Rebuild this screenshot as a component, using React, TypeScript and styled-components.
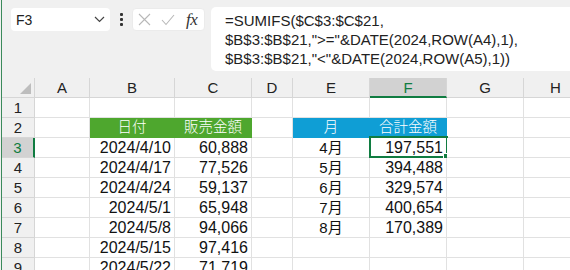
import React from 'react';
import styled, { createGlobalStyle } from 'styled-components';

const GlobalStyle = createGlobalStyle`
  html, body {
    margin: 0;
    padding: 0;
    background: #f0f0f0;
    overflow: hidden;
  }
  body {
    font-family: "Liberation Sans", "Noto Sans CJK JP", sans-serif;
  }
`;

const GREEN = '#107c41';
const GRID = '#e1e1e1';
const HEAD = '#f0f0f0';

const Window = styled.div`
  width: 570px;
  height: 270px;
  overflow: hidden;
  border-left: 1px solid #f0f0f0;
  box-sizing: border-box;
  background: #f0f0f0;
`;

const Inner = styled.div`
  height: 100%;
  border-left: 1px solid #3b8a5b;
  display: flex;
  flex-direction: column;
`;

const RibbonEdge = styled.div`
  height: 3px;
  margin-left: 10px;
  background: #fff;
  border-radius: 0 0 0 4px;
`;

const FormulaBar = styled.div`
  display: flex;
  align-items: flex-start;
  padding: 7px 0 0 9px;
  height: 71px;
  box-sizing: border-box;
`;

const NameBox = styled.div`
  width: 99px;
  height: 23px;
  margin-top: 1px;
  box-sizing: border-box;
  background: #fff;
  border-radius: 4px;
  display: flex;
  align-items: center;
  justify-content: space-between;
  padding: 0 5px 0 5px;
  font-size: 14px;
  color: #222;
`;

const Dots = styled.div`
  width: 22px;
  height: 23px;
  margin-top: 1px;
  display: flex;
  flex-direction: column;
  align-items: center;
  justify-content: center;
  gap: 2px;
`;

const Dot = styled.span`
  width: 3px;
  height: 3px;
  background: #333;
  border-radius: 1px;
`;

const IconBox = styled.div`
  width: 73px;
  height: 23px;
  margin-top: 1px;
  box-sizing: border-box;
  background: #fff;
  border-radius: 4px;
  border: 1px solid #ebebeb;
  display: flex;
  align-items: center;
  padding: 0 4px 0 5px;
  gap: 10px;
`;

const Fx = styled.span`
  font-family: "Liberation Serif", serif;
  font-style: italic;
  font-size: 17px;
  color: #333;
  margin-left: 1px;
  letter-spacing: -0.5px;
`;

const FormulaBox = styled.div`
  flex: 1;
  margin-left: 6px;
  height: 64px;
  box-sizing: border-box;
  background: #fff;
  border-radius: 5px 0 0 5px;
  padding: 4px 0 0 14px;
  font-size: 15px;
  line-height: 19px;
  color: #222;
  white-space: pre;
`;

const Sheet = styled.div`
  margin-top: 7px;
  display: grid;
  grid-template-columns: 33px 55px 85px 77px 41px 77px 77px 77px 64px;
  grid-auto-rows: 20px;
  background: #fff;
`;

const ColHead = styled.div<{ $active?: boolean }>`
  background: ${(p) => (p.$active ? '#d2d2d2' : HEAD)};
  color: ${(p) => (p.$active ? GREEN : '#222')};
  border-right: 1px solid #d6d6d6;
  border-bottom: ${(p) => (p.$active ? `2px solid ${GREEN}` : '1px solid #d6d6d6')};
  box-sizing: border-box;
  display: flex;
  align-items: center;
  justify-content: center;
  font-size: 15px;
`;

const Corner = styled.div`
  background: ${HEAD};
  border-right: 1px solid #d6d6d6;
  border-bottom: 1px solid #d6d6d6;
  box-sizing: border-box;
  display: flex;
  align-items: flex-end;
  justify-content: flex-end;
  padding: 0 3px 3px 0;
`;

const RowHead = styled.div<{ $active?: boolean }>`
  background: ${(p) => (p.$active ? '#d2d2d2' : HEAD)};
  color: ${(p) => (p.$active ? GREEN : '#222')};
  border-right: ${(p) => (p.$active ? `2px solid ${GREEN}` : '1px solid #d6d6d6')};
  border-bottom: 1px solid #d6d6d6;
  box-sizing: border-box;
  display: flex;
  align-items: center;
  justify-content: center;
  font-size: 15px;
`;

const Cell = styled.div<{ $align?: 'left' | 'right' | 'center'; $fill?: string; $small?: boolean }>`
  position: relative;
  background: ${(p) => p.$fill || '#fff'};
  color: ${(p) => (p.$fill ? '#fff' : '#111')};
  border-right: 1px solid ${(p) => p.$fill || GRID};
  border-bottom: 1px solid ${(p) => p.$fill || GRID};
  box-sizing: border-box;
  font-size: ${(p) => (p.$small ? '14.5px' : '16px')};
  font-weight: ${(p) => (p.$small ? 300 : 400)};
  line-height: 19px;
  text-align: ${(p) => p.$align || 'left'};
  padding: 0 3px;
  white-space: nowrap;
  overflow: visible;
`;

const Selection = styled.div`
  position: absolute;
  top: -2px;
  left: -1px;
  right: -2px;
  bottom: -1px;
  border: 2px solid ${GREEN};
  pointer-events: none;

  &::after {
    content: '';
    position: absolute;
    right: -4px;
    bottom: -4px;
    width: 5px;
    height: 5px;
    background: ${GREEN};
    border: 1px solid #fff;
  }
`;

const Month = styled.span`
  font-size: 15px;
`;

const cols = ['A', 'B', 'C', 'D', 'E', 'F', 'G', 'H'];

type Row = { b?: string; c?: string; e?: string; f?: string; head?: boolean };

const rows: Row[] = [
  {},
  { b: '日付', c: '販売金額', e: '月', f: '合計金額', head: true },
  { b: '2024/4/10', c: '60,888', e: '4月', f: '197,551' },
  { b: '2024/4/17', c: '77,526', e: '5月', f: '394,488' },
  { b: '2024/4/24', c: '59,137', e: '6月', f: '329,574' },
  { b: '2024/5/1', c: '65,948', e: '7月', f: '400,654' },
  { b: '2024/5/8', c: '94,066', e: '8月', f: '170,389' },
  { b: '2024/5/15', c: '97,416' },
  { b: '2024/5/22', c: '71,719' },
];

const FORMULA = `=SUMIFS($C$3:$C$21,
$B$3:$B$21,">="&DATE(2024,ROW(A4),1),
$B$3:$B$21,"<"&DATE(2024,ROW(A5),1))`;

const App = () => {
  return (
    <Window>
      <GlobalStyle />
      <Inner>
        <RibbonEdge />
        <FormulaBar>
          <NameBox>
            <span>F3</span>
            <svg width="11" height="7" viewBox="0 0 11 7">
              <path d="M1 1 L5.5 5.5 L10 1" fill="none" stroke="#444" strokeWidth="1.2" />
            </svg>
          </NameBox>
          <Dots>
            <Dot />
            <Dot />
            <Dot />
          </Dots>
          <IconBox>
            <svg width="13" height="13" viewBox="0 0 13 13">
              <path d="M1 1 L12 12 M12 1 L1 12" stroke="#b8b8b8" strokeWidth="1.1" />
            </svg>
            <svg width="14" height="12" viewBox="0 0 14 12">
              <path d="M1 6 L5 10.5 L13 1" fill="none" stroke="#b8b8b8" strokeWidth="1.1" />
            </svg>
            <Fx>fx</Fx>
          </IconBox>
          <FormulaBox>{FORMULA}</FormulaBox>
        </FormulaBar>
        <Sheet>
          <Corner>
            <svg width="11" height="11" viewBox="0 0 11 11">
              <path d="M11 0 L11 11 L0 11 Z" fill="#bdbdbd" />
            </svg>
          </Corner>
          {cols.map((c) => (
            <ColHead key={c} $active={c === 'F'}>
              {c}
            </ColHead>
          ))}
          {rows.map((r, i) => {
            const n = i + 1;
            const green = r.head ? '#4ea72e' : undefined;
            const blue = r.head ? '#0f9ed5' : undefined;
            return (
              <React.Fragment key={n}>
                <RowHead $active={n === 3}>{n}</RowHead>
                <Cell />
                <Cell $align={r.head ? 'center' : 'right'} $fill={green} $small={r.head}>
                  {r.b}
                </Cell>
                <Cell $align={r.head ? 'center' : 'right'} $fill={green} $small={r.head}>
                  {r.c}
                </Cell>
                <Cell />
                <Cell $align="center" $fill={blue} $small={r.head}>
                  {r.head ? r.e : <Month>{r.e}</Month>}
                </Cell>
                <Cell $align={r.head ? 'center' : 'right'} $fill={blue} $small={r.head}>
                  {r.f}
                  {n === 3 && <Selection />}
                </Cell>
                <Cell />
                <Cell />
              </React.Fragment>
            );
          })}
        </Sheet>
      </Inner>
    </Window>
  );
};

export default App;
